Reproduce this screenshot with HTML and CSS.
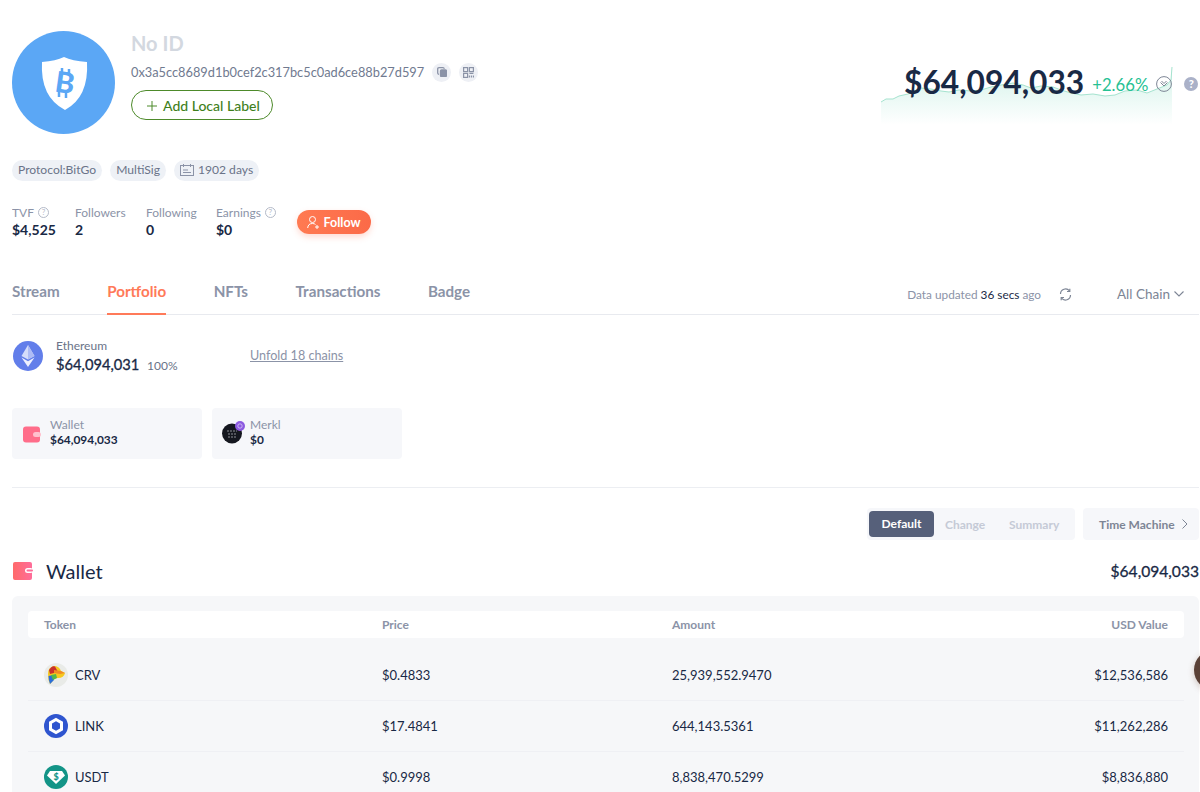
FILE: index.html
```html
<!DOCTYPE html>
<html lang="en">
<head>
    <meta charset="UTF-8">
    <title>Portfolio</title>
    <link rel="stylesheet" href="styles.css">
</head>
<body>
    <div class="pagina">
        <div class="cabecera">
            <div class="avatar">
                <svg width="103" height="103" viewBox="0 0 103 103">
                    <path d="M30 31 Q44 30 52 26 Q60 30 75 31 Q77 66 53 79 Q28 66 30 31Z" fill="#fff"/>
                    <text x="53" y="62" class="avatar-b" text-anchor="middle" transform="rotate(8 53 52)">B</text>
                    <path d="M50 37v5M57 38v5M47 61v5M54 62v5" stroke="#5ba7f5" stroke-width="2.5"/>
                </svg>
            </div>
            <div class="perfil">
                <div class="nombre">No ID</div>
                <div class="direccion">
                    <span>0x3a5cc8689d1b0cef2c317bc5c0ad6ce88b27d597</span>
                    <span class="mini">
                        <svg width="10" height="10" viewBox="0 0 10 10" fill="none" stroke="#8b93a7" stroke-width="1.3"><rect x="3.5" y="3" width="6" height="6.5" rx="1" fill="#8b93a7"/><path d="M2 7.5Q.7 7 .7 6V2Q.7.7 2 .7H6Q7 .7 7.4 1.8"/></svg>
                    </span>
                    <span class="mini">
                        <svg width="11" height="11" viewBox="0 0 11 11" fill="none" stroke="#8b93a7" stroke-width="1.2"><rect x=".6" y=".6" width="4" height="4"/><rect x="6.4" y=".6" width="4" height="4"/><rect x=".6" y="6.4" width="4" height="4"/><path d="M6.4 6.4h4M6.4 8.4v2.2M8.4 8.4v2.2M10.4 8.4v2.2"/></svg>
                    </span>
                </div>
                <button class="etiqueta-local">
                    <svg width="10" height="10" viewBox="0 0 10 10" stroke="#4d8a2a" stroke-width="1"><path d="M5 0v10M0 5h10"/></svg>
                    Add Local Label
                </button>
            </div>
            <div class="balance">
                <svg class="grafica" width="292" height="70" viewBox="0 0 292 70">
                    <defs>
                        <linearGradient id="relleno" x1="0" y1="0" x2="0" y2="1">
                            <stop offset="0" stop-color="#27c193" stop-opacity=".2"/>
                            <stop offset="1" stop-color="#27c193" stop-opacity="0"/>
                        </linearGradient>
                    </defs>
                    <path d="M0 42L5 39 12 39 18 36 27 34 33 31 40 28 50 29 60 31 68 32 78 30 90 31 100 30 110 27 120 25 132 23 142 25 150 28 160 26 172 27 180 30 190 33 200 35 212 34 224 36 234 35 244 31 256 30 266 33 276 29 286 25 290 20 291 7V65H0Z" fill="url(#relleno)"/>
                    <path d="M0 42L5 39 12 39 18 36 27 34 33 31 40 28 50 29 60 31 68 32 78 30 90 31 100 30 110 27 120 25 132 23 142 25 150 28 160 26 172 27 180 30 190 33 200 35 212 34 224 36 234 35 244 31 256 30 266 33 276 29 286 25 290 20 291 7" fill="none" stroke="#a5e3cf" stroke-width="1"/>
                </svg>
                <span class="monto">$64,094,033</span>
                <span class="cambio">+2.66%</span>
                <span class="desplegar">
                    <svg width="16" height="16" viewBox="0 0 16 16" fill="none" stroke="#7d8595" stroke-width="1"><circle cx="8" cy="8" r="7.4"/><path d="M4.5 6.5L8 10l3.5-3.5M5.5 5L8 7.5 10.5 5"/></svg>
                </span>
                <span class="ayuda">?</span>
            </div>
        </div>

        <div class="etiquetas">
            <span class="etiqueta">Protocol:BitGo</span>
            <span class="etiqueta">MultiSig</span>
            <span class="etiqueta">
                <svg width="14" height="12" viewBox="0 0 14 12" fill="none" stroke="#8b93a7"><rect x=".5" y="1.5" width="13" height="10"/><path d="M3.5 0v3M10.5 0v3M3 6h5M3 8.5h8"/></svg>
                1902 days
            </span>
        </div>

        <div class="estadisticas">
            <div class="dato d1">
                <div class="dato-titulo">TVF <i class="circulo">?</i></div>
                <div class="dato-valor">$4,525</div>
            </div>
            <div class="dato d2">
                <div class="dato-titulo">Followers</div>
                <div class="dato-valor">2</div>
            </div>
            <div class="dato d3">
                <div class="dato-titulo">Following</div>
                <div class="dato-valor">0</div>
            </div>
            <div class="dato d4">
                <div class="dato-titulo">Earnings <i class="circulo">?</i></div>
                <div class="dato-valor">$0</div>
            </div>
            <button class="seguir">
                <svg width="12" height="13" viewBox="0 0 12 13" fill="none" stroke="#fff" stroke-width="1"><circle cx="5.5" cy="3.5" r="3"/><path d="M.7 12Q1 7.5 5.5 7.5 7.5 7.5 8.5 8.5M8 11h4M10 9v4"/></svg>
                Follow
            </button>
        </div>

        <div class="pestanas">
            <a class="pestana">Stream</a>
            <a class="pestana activa">Portfolio</a>
            <a class="pestana">NFTs</a>
            <a class="pestana">Transactions</a>
            <a class="pestana">Badge</a>
            <div class="actualizado">
                Data updated <b>36 secs</b> ago
                <svg width="13" height="13" viewBox="0 0 13 13" fill="none" stroke="#7d8595" stroke-width="1.2"><path d="M1.5 6A5 5 0 0 1 10.5 3M11.5 7A5 5 0 0 1 2.5 10"/><path d="M10.8.8v2.7H8M2.2 12.2V9.5H5"/></svg>
            </div>
            <div class="cadena">
                All Chain
                <svg width="10" height="6" viewBox="0 0 10 6" fill="none" stroke="#7d8595" stroke-width="1.1"><path d="M.5.5L5 5 9.5.5"/></svg>
            </div>
        </div>

        <div class="resumen-cadena">
            <svg width="30" height="30" viewBox="0 0 30 30">
                <circle cx="15" cy="15" r="15" fill="#627eea"/>
                <path d="M15 4L8.5 15 15 18.5 21.5 15Z" fill="#d5ddfa"/>
                <path d="M15 4V18.5L21.5 15Z" fill="#aebcf5"/>
                <path d="M8.5 16.5L15 26 21.5 16.5 15 20.2Z" fill="#eef1fe"/>
            </svg>
            <div class="cadena-info">
                <div class="cadena-nombre">Ethereum</div>
                <div class="cadena-monto">$64,094,031 <small>100%</small></div>
            </div>
            <a class="desplegar-cadenas">Unfold 18 chains</a>
        </div>

        <div class="tarjetas">
            <div class="tarjeta">
                <svg class="icono-tarjeta" width="18" height="17" viewBox="0 0 18 17">
                    <rect width="17" height="16" y=".5" rx="3" fill="#ff6d8a"/>
                    <rect x="10" y="6" width="8" height="5" rx="2.5" fill="#ffc0cd"/>
                </svg>
                <div class="tarjeta-texto">
                    <div class="tarjeta-nombre">Wallet</div>
                    <div class="tarjeta-valor">$64,094,033</div>
                </div>
            </div>
            <div class="tarjeta merkl">
                <svg class="icono-merkl" width="24" height="24" viewBox="0 0 24 24">
                    <circle cx="10" cy="13.5" r="10" fill="#15171f"/>
                    <path d="M5 11h10M6 14h8M6 17h8" stroke="#8d8f96" stroke-width="1.2" stroke-dasharray="2 1"/>
                    <circle cx="18" cy="6" r="5" fill="#8c5ae0"/>
                    <circle cx="18" cy="6" r="2.2" fill="none" stroke="#d9c8f7" stroke-width=".8"/>
                </svg>
                <div class="tarjeta-texto">
                    <div class="tarjeta-nombre">Merkl</div>
                    <div class="tarjeta-valor">$0</div>
                </div>
            </div>
        </div>

        <div class="controles">
            <div class="segmentos">
                <span class="segmento activo">Default</span>
                <span class="segmento">Change</span>
                <span class="segmento">Summary</span>
            </div>
            <div class="maquina">
                Time Machine
                <svg width="6" height="10" viewBox="0 0 6 10" fill="none" stroke="#7d8595"><path d="M.5.5L5 5 .5 9.5"/></svg>
            </div>
        </div>

        <div class="titulo-seccion">
            <svg width="20" height="18" viewBox="0 0 20 18">
                <defs>
                    <linearGradient id="cartera" x1="0" y1="0" x2="1" y2="0">
                        <stop offset="0" stop-color="#ff6a6a"/>
                        <stop offset="1" stop-color="#ff6d9a"/>
                    </linearGradient>
                </defs>
                <rect width="19" height="18" rx="2" fill="url(#cartera)"/>
                <rect x="12" y="6" width="8" height="5" rx="2.5" fill="#fff"/>
                <rect x="13.5" y="7.5" width="6.5" height="2" rx="1" fill="#ff6d9a"/>
            </svg>
            <h2>Wallet</h2>
            <span class="total">$64,094,033</span>
        </div>

        <div class="panel">
            <div class="fila encabezado">
                <div class="col-token">Token</div>
                <div class="col-precio">Price</div>
                <div class="col-cantidad">Amount</div>
                <div class="col-valor">USD Value</div>
            </div>
            <div class="fila">
                <div class="col-token">
                    <svg width="24" height="24" viewBox="0 0 24 24">
                        <circle cx="12" cy="12" r="12" fill="#e9ebe8"/>
                        <path d="M4 11Q4 4 10 3 15 3 17 8L21 10Q20 15 14 15 10 15 8 19L6 21Q4 17 4 11Z" fill="#f6c81e"/>
                        <path d="M5 7Q8 2 11 3.5L14 9 6 11Z" fill="#c9302c"/>
                        <path d="M10 7L17 8 21 10 16 11 10 10Z" fill="#f08a24"/>
                        <path d="M4.5 13L9 12 10 17 8 19 6 21Q4.5 17 4.5 13Z" fill="#2a6fd8"/>
                        <path d="M7 12L12 11 13 15 9 17Z" fill="#53b84a"/>
                    </svg>
                    CRV
                </div>
                <div class="col-precio">$0.4833</div>
                <div class="col-cantidad">25,939,552.9470</div>
                <div class="col-valor">$12,536,586</div>
            </div>
            <div class="fila">
                <div class="col-token">
                    <svg width="24" height="24" viewBox="0 0 24 24">
                        <circle cx="12" cy="12" r="12" fill="#2f55cf"/>
                        <path d="M12 5.5L17.5 8.7V15.3L12 18.5 6.5 15.3V8.7Z" fill="#2f55cf" stroke="#fff" stroke-width="3"/>
                    </svg>
                    LINK
                </div>
                <div class="col-precio">$17.4841</div>
                <div class="col-cantidad">644,143.5361</div>
                <div class="col-valor">$11,262,286</div>
            </div>
            <div class="fila">
                <div class="col-token">
                    <svg width="24" height="24" viewBox="0 0 24 24">
                        <circle cx="12" cy="12" r="12" fill="#139487"/>
                        <path d="M6 6H18L21 10.5 12 19 3 10.5Z" fill="#fff"/>
                        <text x="12" y="14.5" class="usdt-signo" text-anchor="middle">$</text>
                    </svg>
                    USDT
                </div>
                <div class="col-precio">$0.9998</div>
                <div class="col-cantidad">8,838,470.5299</div>
                <div class="col-valor">$8,836,880</div>
            </div>
        </div>
    </div>
    <div class="burbuja"></div>
</body>
</html>
```

FILE: styles.css
```css
* {
    box-sizing: border-box;
}
html, body {
    margin: 0;
    height: 792px;
    overflow: hidden;
    background-color: #fff;
}
body {
    font-family: "Lato", "Open Sans", sans-serif;
    color: #192945;
    position: relative;
}
svg {
    flex: none;
}
.pagina {
    width: 1187px;
    height: 792px;
    margin-left: 12px;
    padding-top: 31px;
    overflow: hidden;
}

/* cabecera */
.cabecera {
    display: flex;
    height: 103px;
}
.avatar {
    width: 103px;
    height: 103px;
    border-radius: 50%;
    background-color: #5ba7f5;
}
.avatar-b {
    font-family: "Lato", sans-serif;
    font-weight: 900;
    font-size: 29px;
    fill: #5ba7f5;
}
.perfil {
    margin-left: 16px;
}
.nombre {
    font-size: 20px;
    font-weight: 700;
    color: #d3d8e0;
    line-height: 24px;
}
.direccion {
    display: flex;
    align-items: center;
    font-size: 12.8px;
    color: #707a90;
    margin-top: 7px;
    height: 20px;
}
.mini {
    width: 19px;
    height: 19px;
    border-radius: 50%;
    background-color: #eef0f5;
    display: flex;
    align-items: center;
    justify-content: center;
    margin-left: 8px;
}
.etiqueta-local {
    margin-top: 8px;
    display: flex;
    align-items: center;
    gap: 6px;
    width: 142px;
    height: 30px;
    padding: 1px 0 0 15px;
    border: 1px solid #4d8a2a;
    border-radius: 15px;
    background: #fff;
    color: #3f7f1c;
    font: 500 14px "Lato", sans-serif;
}
.balance {
    position: relative;
    margin-left: auto;
    width: 318px;
    height: 94px;
    display: flex;
    align-items: center;
    align-self: flex-start;
    padding: 0 0 0 23px;
}
.grafica {
    position: absolute;
    left: 0;
    top: 29px;
}
.monto {
    position: relative;
    font-size: 31.7px;
    font-weight: 700;
    color: #192945;
    margin-top: 8px;
}
.cambio {
    position: relative;
    font-size: 16.7px;
    color: #27c193;
    margin: 13px 0 0 8px;
}
.desplegar {
    position: relative;
    margin: 12px 0 0 8px;
    height: 16px;
}
.ayuda {
    position: relative;
    flex: none;
    width: 14px;
    height: 14px;
    border-radius: 50%;
    background-color: #aab1c8;
    color: #fff;
    font-size: 11px;
    font-weight: 900;
    line-height: 14px;
    text-align: center;
    margin: 12px 0 0 12px;
}

/* etiquetas */
.etiquetas {
    display: flex;
    gap: 8px;
    margin-top: 26px;
}
.etiqueta {
    display: flex;
    align-items: center;
    gap: 4px;
    height: 21px;
    padding: 0 6px 2px;
    border-radius: 11px;
    background-color: #eef1f6;
    color: #6a7388;
    font-size: 12.1px;
}

/* estadisticas */
.estadisticas {
    display: flex;
    margin-top: 24px;
    height: 36px;
}
.dato-titulo {
    font-size: 12px;
    color: #8b93a7;
    line-height: 15px;
    display: flex;
    align-items: center;
    gap: 4px;
}
.dato-valor {
    font-size: 14px;
    font-weight: 700;
    color: #192945;
    line-height: 18px;
    margin-top: 1px;
}
.d1 { width: 63px; }
.d2 { width: 71px; }
.d3 { width: 70px; }
.d4 { width: 81px; }
.circulo {
    width: 11px;
    height: 11px;
    border: 1px solid #b4bac8;
    border-radius: 50%;
    font-size: 8px;
    font-style: normal;
    line-height: 9px;
    text-align: center;
    color: #b4bac8;
}
.seguir {
    display: flex;
    align-items: center;
    justify-content: center;
    gap: 4px;
    width: 74px;
    height: 24px;
    margin-top: 5px;
    border: 0;
    border-radius: 12px;
    background: linear-gradient(90deg, #ff7a52, #fb6a48);
    box-shadow: 0 3px 6px rgba(255, 112, 80, .25);
    color: #fff;
    font: 700 12.5px "Lato", sans-serif;
}

/* pestanas */
.pestanas {
    display: flex;
    align-items: center;
    height: 45px;
    margin-top: 29px;
    border-bottom: 1px solid #e8eaef;
    position: relative;
}
.pestana {
    display: block;
    height: 45px;
    line-height: 42px;
    margin-right: 47.5px;
    font-size: 15.2px;
    font-weight: 700;
    color: #8b93a7;
}
.pestana.activa {
    color: #ff7a59;
    border-bottom: 2px solid #ff7a59;
}
.actualizado {
    margin-left: auto;
    display: flex;
    align-items: center;
    gap: 3px;
    font-size: 11.8px;
    color: #8b93a7;
    margin-top: 5px;
}
.actualizado b {
    font-weight: 400;
    color: #192945;
}
.actualizado svg {
    margin-left: 15px;
}
.cadena {
    display: flex;
    align-items: center;
    gap: 4px;
    width: 82px;
    margin-left: 45px;
    font-size: 13.5px;
    color: #7d8595;
    margin-top: 4px;
}

/* cadena */
.resumen-cadena {
    display: flex;
    align-items: center;
    margin-top: 26px;
    padding-left: 1px;
    height: 30px;
}
.cadena-info {
    margin-left: 13px;
    padding-top: 4px;
    width: 194px;
}
.cadena-nombre {
    font-size: 12px;
    color: #6a7388;
    line-height: 14px;
}
.cadena-monto {
    font-size: 14.7px;
    line-height: 22px;
    -webkit-text-stroke: .3px #192945;
}
.cadena-monto small {
    font-size: 12px;
    color: #6a7388;
    margin-left: 4px;
    -webkit-text-stroke: 0;
}
.desplegar-cadenas {
    font-size: 12.6px;
    color: #8b93a7;
    text-decoration: underline;
    margin-top: -1px;
}

/* tarjetas */
.tarjetas {
    display: flex;
    gap: 10px;
    margin-top: 37px;
    padding-bottom: 28px;
    border-bottom: 1px solid #eceef2;
}
.tarjeta {
    display: flex;
    align-items: center;
    gap: 9px;
    width: 190px;
    height: 51px;
    padding-left: 11px;
    border-radius: 4px;
    background-color: #f6f7fa;
}
.tarjeta.merkl {
    gap: 4px;
    padding-left: 10px;
}
.tarjeta-texto {
    margin-top: -3px;
}
.icono-merkl {
    margin-top: -3px;
}
.icono-tarjeta {
    margin-top: 2px;
}
.tarjeta-nombre {
    font-size: 12px;
    color: #8b93a7;
    line-height: 15px;
}
.tarjeta-valor {
    font-size: 11.9px;
    font-weight: 700;
    color: #192945;
    line-height: 15px;
}

/* controles */
.controles {
    display: flex;
    justify-content: flex-end;
    gap: 8px;
    margin-top: 20px;
    font-size: 12px;
    font-weight: 700;
}
.segmentos {
    display: flex;
    align-items: center;
    width: 208px;
    height: 32px;
    padding-left: 2px;
    border-radius: 4px;
    background-color: #f6f7fa;
}
.segmento {
    color: #c5cad6;
    margin-left: 11px;
    width: 53px;
}
.segmento.activo {
    width: 65px;
    height: 26px;
    margin-left: 0;
    line-height: 26px;
    text-align: center;
    border-radius: 4px;
    background-color: #56607a;
    color: #fff;
}
.maquina {
    display: flex;
    align-items: center;
    gap: 7px;
    width: 116px;
    height: 32px;
    padding-left: 16px;
    border-radius: 4px;
    background-color: #f6f7fa;
    color: #7d8595;
}

/* seccion */
.titulo-seccion {
    display: flex;
    align-items: center;
    height: 24px;
    margin-top: 19px;
    padding-left: 1px;
}
.titulo-seccion h2 {
    margin: 0 0 0 13px;
    font-size: 20px;
    font-weight: 400;
}
.total {
    margin-left: auto;
    font-size: 15.6px;
    -webkit-text-stroke: .3px #192945;
}
.panel {
    margin-top: 13px;
    height: 240px;
    padding: 15px 15px 0 16px;
    border-radius: 6px;
    background-color: #f6f7f9;
}
.fila {
    display: flex;
    align-items: center;
    height: 51px;
    padding: 0 16px 1px;
    border-bottom: 1px solid #eff0f4;
    font-size: 13px;
    color: #192945;
}
.fila.encabezado {
    height: 27px;
    margin-bottom: 12px;
    padding-bottom: 0;
    border: 0;
    border-radius: 4px;
    background-color: #fff;
    font-size: 12px;
    font-weight: 700;
    color: #8b93a7;
}
.col-token {
    display: flex;
    align-items: center;
    gap: 7px;
    width: 338px;
}
.col-precio {
    width: 290px;
}
.col-cantidad {
    width: 300px;
}
.col-valor {
    flex: 1;
    text-align: right;
}
.usdt-signo {
    font-size: 9px;
    font-weight: 900;
    fill: #139487;
}

/* burbuja del chat */
.burbuja {
    position: absolute;
    left: 1194px;
    top: 650px;
    width: 40px;
    height: 40px;
    border-radius: 50%;
    background-color: #5a4137;
    box-shadow: 0 2px 6px rgba(120, 80, 60, .3);
}
```
